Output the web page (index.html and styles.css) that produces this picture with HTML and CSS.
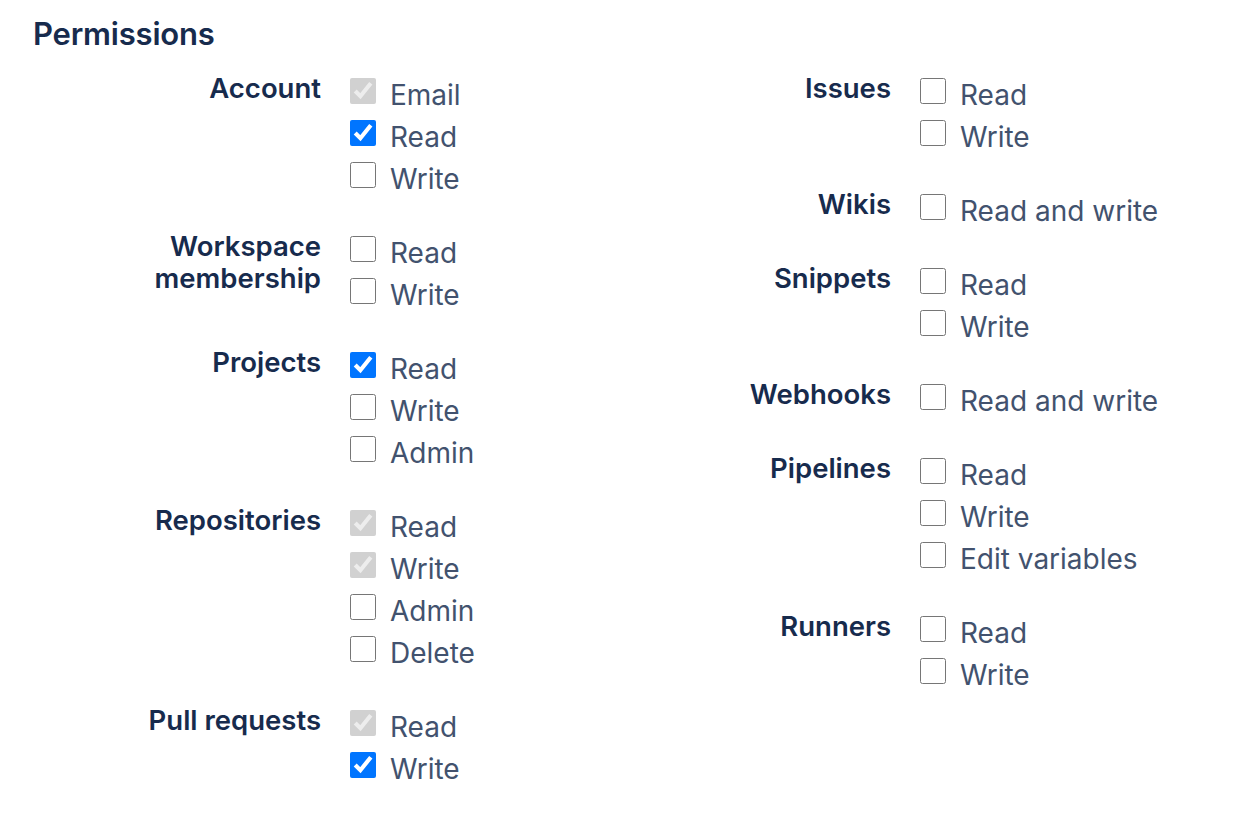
FILE: index.html
```html
<!DOCTYPE html>
<html>
<head>
<meta charset="utf-8">
<link rel="stylesheet" href="styles.css">
</head>
<body>
<div class="page">
  <h1 class="title">Permissions</h1>
  <div class="columns">
    <div class="column">
      <div class="group">
        <div class="label">Account</div>
        <div class="options">
          <label class="option"><input type="checkbox" checked disabled><span>Email</span></label>
          <label class="option"><input type="checkbox" checked><span>Read</span></label>
          <label class="option"><input type="checkbox"><span>Write</span></label>
        </div>
      </div>
      <div class="group">
        <div class="label">Workspace membership</div>
        <div class="options">
          <label class="option"><input type="checkbox"><span>Read</span></label>
          <label class="option"><input type="checkbox"><span>Write</span></label>
        </div>
      </div>
      <div class="group">
        <div class="label">Projects</div>
        <div class="options">
          <label class="option"><input type="checkbox" checked><span>Read</span></label>
          <label class="option"><input type="checkbox"><span>Write</span></label>
          <label class="option"><input type="checkbox"><span>Admin</span></label>
        </div>
      </div>
      <div class="group">
        <div class="label">Repositories</div>
        <div class="options">
          <label class="option"><input type="checkbox" checked disabled><span>Read</span></label>
          <label class="option"><input type="checkbox" checked disabled><span>Write</span></label>
          <label class="option"><input type="checkbox"><span>Admin</span></label>
          <label class="option"><input type="checkbox"><span>Delete</span></label>
        </div>
      </div>
      <div class="group">
        <div class="label">Pull requests</div>
        <div class="options">
          <label class="option"><input type="checkbox" checked disabled><span>Read</span></label>
          <label class="option"><input type="checkbox" checked><span>Write</span></label>
        </div>
      </div>
    </div>
    <div class="column">
      <div class="group">
        <div class="label">Issues</div>
        <div class="options">
          <label class="option"><input type="checkbox"><span>Read</span></label>
          <label class="option"><input type="checkbox"><span>Write</span></label>
        </div>
      </div>
      <div class="group">
        <div class="label">Wikis</div>
        <div class="options">
          <label class="option"><input type="checkbox"><span>Read and write</span></label>
        </div>
      </div>
      <div class="group">
        <div class="label">Snippets</div>
        <div class="options">
          <label class="option"><input type="checkbox"><span>Read</span></label>
          <label class="option"><input type="checkbox"><span>Write</span></label>
        </div>
      </div>
      <div class="group">
        <div class="label">Webhooks</div>
        <div class="options">
          <label class="option"><input type="checkbox"><span>Read and write</span></label>
        </div>
      </div>
      <div class="group">
        <div class="label">Pipelines</div>
        <div class="options">
          <label class="option"><input type="checkbox"><span>Read</span></label>
          <label class="option"><input type="checkbox"><span>Write</span></label>
          <label class="option"><input type="checkbox"><span>Edit variables</span></label>
        </div>
      </div>
      <div class="group">
        <div class="label">Runners</div>
        <div class="options">
          <label class="option"><input type="checkbox"><span>Read</span></label>
          <label class="option"><input type="checkbox"><span>Write</span></label>
        </div>
      </div>
    </div>
  </div>
</div>
</body>
</html>
```
FILE: styles.css
```css
html, body {
  margin: 0;
  padding: 0;
  background: #ffffff;
}

body {
  font-family: Inter, "Noto Sans", "Liberation Sans", sans-serif;
  color: #172B4D;
}

.page {
  padding: 14px 0 0 33px;
}

.title {
  margin: 0 0 16px 0;
  font-size: 31px;
  line-height: 40px;
  font-weight: 600;
  color: #172B4D;
  letter-spacing: -0.2px;
}

.columns {
  display: grid;
  grid-template-columns: 570px 570px;
}

.group {
  display: grid;
  grid-template-columns: 288px auto;
  column-gap: 29px;
  margin-bottom: 32px;
}

.label {
  text-align: right;
  font-size: 27.5px;
  line-height: 32px;
  font-weight: 600;
  color: #172B4D;
  padding-top: 2px;
}

.options {
  display: flex;
  flex-direction: column;
}

.option {
  display: flex;
  align-items: center;
  height: 42px;
  gap: 14px;
  font-size: 28px;
  color: #42526E;
}

.option span {
  padding-top: 7px;
}

.option input {
  width: 26px;
  height: 26px;
  margin: 0;
  accent-color: #0075FF;
}
```
